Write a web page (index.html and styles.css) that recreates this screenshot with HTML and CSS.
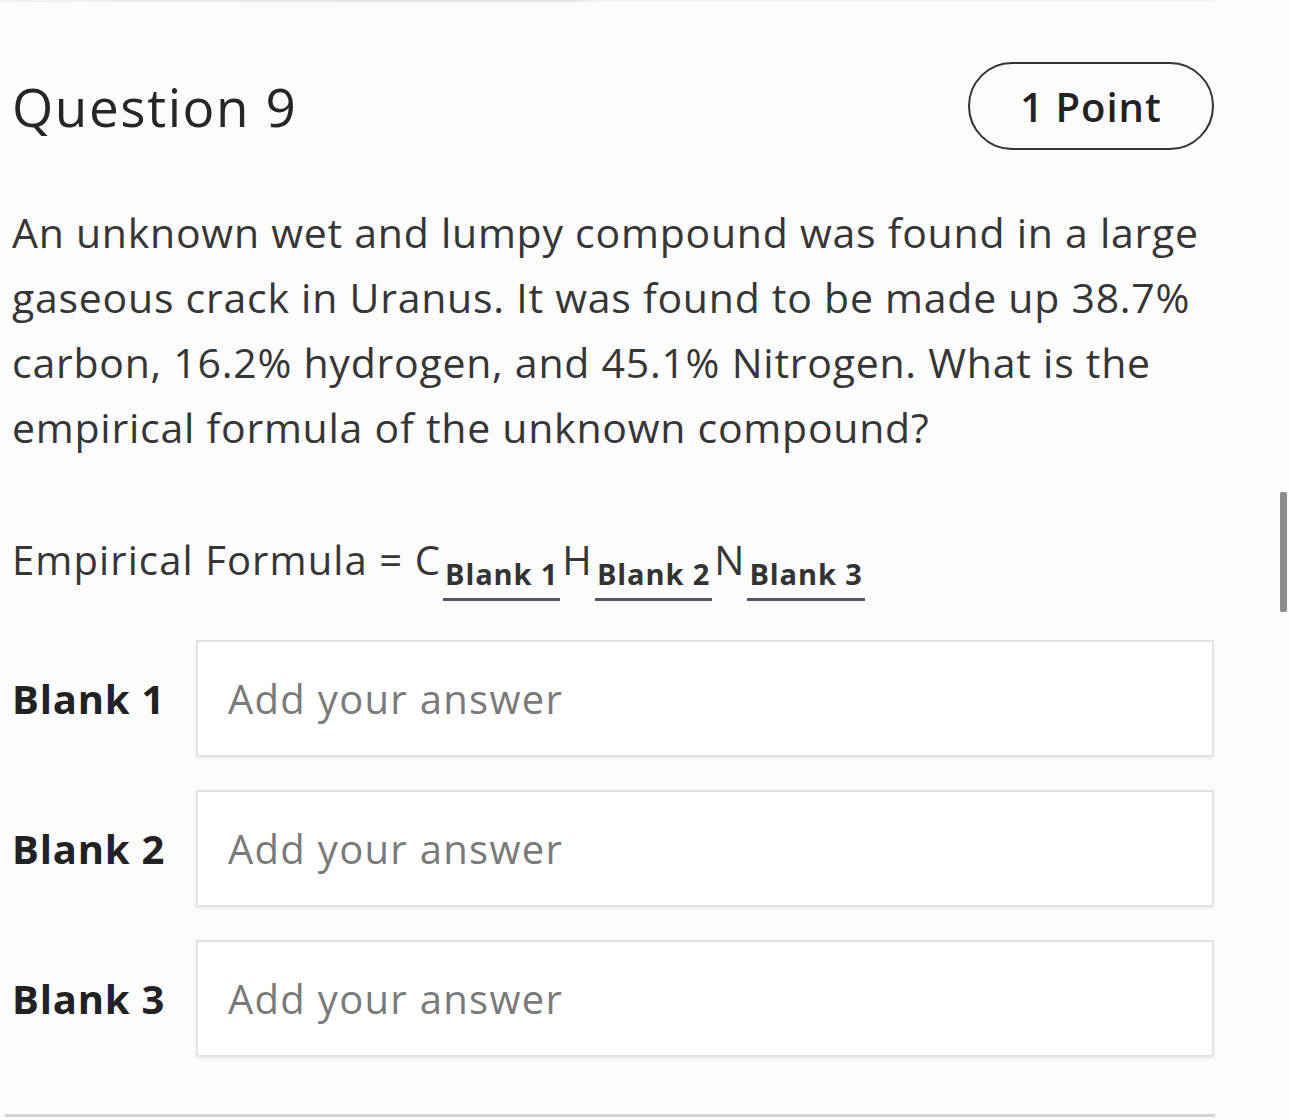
FILE: index.html
```html
<!DOCTYPE html>
<html>
<head>
<meta charset="utf-8">
<link rel="stylesheet" href="styles.css">
</head>
<body>
<div class="page">
  <div class="topline"></div>
  <div class="question">
    <div class="q-header">
      <h1 class="q-title">Question 9</h1>
      <span class="points">1 Point</span>
    </div>
    <p class="q-text">An unknown wet and lumpy compound was found in a large gaseous crack in Uranus. It was found to be made up 38.7% carbon, 16.2% hydrogen, and 45.1% Nitrogen. What is the empirical formula of the unknown compound?</p>
    <p class="formula">Empirical Formula = C<span class="blank">Blank 1</span>H<span class="blank">Blank 2</span>N<span class="blank">Blank 3</span></p>
    <div class="blanks">
      <div class="blank-row">
        <span class="blank-label">Blank 1</span>
        <div class="input">Add your answer</div>
      </div>
      <div class="blank-row">
        <span class="blank-label">Blank 2</span>
        <div class="input">Add your answer</div>
      </div>
      <div class="blank-row">
        <span class="blank-label">Blank 3</span>
        <div class="input">Add your answer</div>
      </div>
    </div>
  </div>
  <div class="bottomline"></div>
  <div class="scrollthumb"></div>
</div>
</body>
</html>
```

FILE: styles.css
```css
html, body {
  margin: 0;
  padding: 0;
  background: #fdfcfd;
}
body {
  font-family: "Open Sans", "Noto Sans", sans-serif;
  color: #333;
  width: 1290px;
  height: 1120px;
  overflow: hidden;
}
.page {
  position: relative;
  height: 1120px;
}
.topline {
  height: 2px;
  margin: 0 75px 0 0;
  background: linear-gradient(to right, #f3f1f3 0, #eae8ea 200px, #e6e4e6 570px, #f5f3f5 600px, #f5f3f5 100%);
}
.question {
  padding: 0 76px 0 12px;
}
.q-header {
  display: flex;
  justify-content: space-between;
  align-items: center;
  margin-top: 60px;
  height: 88px;
}
.q-title {
  margin: 0;
  font-size: 53px;
  font-weight: 400;
  color: #262626;
  letter-spacing: 1.6px;
}
.points {
  box-sizing: border-box;
  display: flex;
  align-items: center;
  justify-content: center;
  width: 246px;
  height: 88px;
  border: 2px solid #333;
  border-radius: 44px;
  font-size: 40px;
  font-weight: 600;
  color: #222;
  letter-spacing: 1px;
}
.q-text {
  margin: 50px 0 0 0;
  font-size: 41px;
  line-height: 65px;
  color: #363636;
  letter-spacing: 0.75px;
}
.formula {
  margin: 70px 0 0 0;
  font-size: 40px;
  line-height: 60px;
  color: #363636;
  letter-spacing: 1.1px;
}
.blank {
  display: inline-block;
  font-size: 29px;
  font-weight: 700;
  vertical-align: -10px;
  line-height: 34px;
  padding: 0 2px 7px;
  border-bottom: 3px solid #5f5168;
  margin: 0 2px;
  letter-spacing: 0.9px;
  color: #333;
}
.blanks {
  margin-top: 39px;
  display: flex;
  flex-direction: column;
  gap: 33px;
}
.blank-row {
  display: flex;
  align-items: center;
  gap: 30px;
}
.blank-label {
  width: 154px;
  font-size: 40px;
  font-weight: 700;
  color: #222;
  letter-spacing: 0.8px;
}
.input {
  box-sizing: border-box;
  flex: 1;
  height: 117px;
  border: 2px solid #e2e2e2;
  background: #fff;
  box-shadow: 0 2px 3px rgba(0,0,0,0.06);
  display: flex;
  align-items: center;
  padding-left: 30px;
  font-size: 40px;
  color: #7a7a7a;
  letter-spacing: 1.3px;
}
.bottomline {
  position: absolute;
  left: 5px;
  width: 1210px;
  top: 1114px;
  height: 3px;
  background: #d6d4d6;
}
.scrollthumb {
  position: absolute;
  left: 1280px;
  top: 492px;
  width: 7px;
  height: 120px;
  background: #8a8a8a;
  border-radius: 2px;
}
```
